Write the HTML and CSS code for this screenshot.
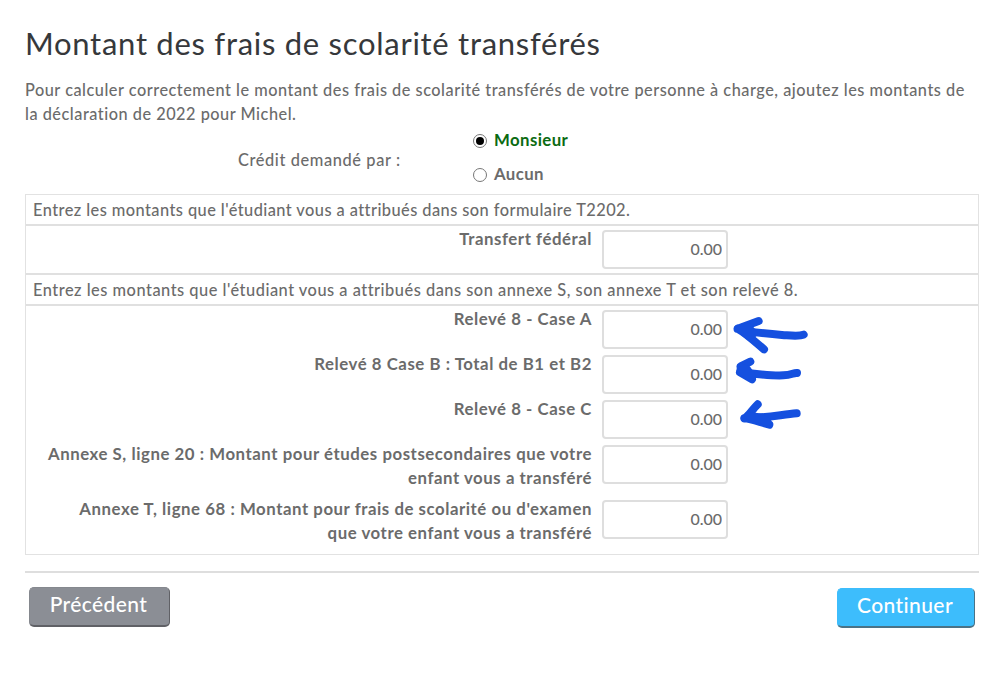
FILE: index.html
```html
<!DOCTYPE html>
<html lang="fr">
<head>
    <meta charset="utf-8">
    <title>Montant des frais de scolarité transférés</title>
    <link rel="stylesheet" href="styles.css">
</head>
<body>
    <h1>Montant des frais de scolarité transférés</h1>
    <p class="intro">Pour calculer correctement le montant des frais de scolarité transférés de votre personne à charge, ajoutez les montants de<br>la déclaration de 2022 pour Michel.</p>

    <div class="credit">
        <div class="credit-label">Crédit demandé par :</div>
        <div class="credit-options">
            <label class="option selected"><input type="radio" name="credit" checked>Monsieur</label>
            <label class="option"><input type="radio" name="credit">Aucun</label>
        </div>
    </div>

    <div class="amounts">
        <div class="section-title t2202">Entrez les montants que l'étudiant vous a attribués dans son formulaire T2202.</div>
        <div class="section federal">
            <div class="row">
                <label for="federal">Transfert fédéral</label>
                <input type="text" id="federal" value="0.00">
            </div>
        </div>
        <div class="section-title">Entrez les montants que l'étudiant vous a attribués dans son annexe S, son annexe T et son relevé 8.</div>
        <div class="section quebec">
            <div class="row">
                <label for="case-a">Relevé 8 - Case A</label>
                <input type="text" id="case-a" value="0.00">
            </div>
            <div class="row">
                <label for="case-b">Relevé 8 Case B : Total de B1 et B2</label>
                <input type="text" id="case-b" value="0.00">
            </div>
            <div class="row">
                <label for="case-c">Relevé 8 - Case C</label>
                <input type="text" id="case-c" value="0.00">
            </div>
            <div class="row tall">
                <label for="annexe-s">Annexe S, ligne 20 : Montant pour études postsecondaires que votre<br>enfant vous a transféré</label>
                <input type="text" id="annexe-s" value="0.00">
            </div>
            <div class="row tall">
                <label for="annexe-t">Annexe T, ligne 68 : Montant pour frais de scolarité ou d'examen<br>que votre enfant vous a transféré</label>
                <input type="text" id="annexe-t" value="0.00">
            </div>
            <svg class="arrows" width="100" height="140" viewBox="0 0 300 420">
                <path d="M53 83L116 60M53 83C80 98 108 125 132 145M53 84C95 95 150 99 200 103C225 105 240 106 251 101" />
                <path d="M60 84L85 78L100 98L85 104Z" />
                <path d="M62 196L91 182M60 214L96 235M60 213C100 218 150 225 190 223C215 222 220 215 231 216" />
                <path d="M62 200L82 206L96 227L62 213Z" />
                <path d="M73 352C88 344 97 325 113 310M73 352C95 354 120 364 148 371M73 352C120 352 180 342 230 337" />
                <path d="M85 344L125 350L142 362Z" />
            </svg>
        </div>
    </div>

    <div class="buttons">
        <button type="button" class="previous">Précédent</button>
        <button type="button" class="next">Continuer</button>
    </div>
</body>
</html>
```
FILE: styles.css
```css
body {
    margin: 0;
    padding: 23px 20px 0 25px;
    font-family: Lato, sans-serif;
    font-size: 16.4px;
    line-height: 24px;
    font-weight: 500;
    color: #6b6b6b;
    background-color: #fff;
}
h1 {
    margin: 0 0 15px;
    font-size: 31px;
    line-height: 40px;
    font-weight: 400;
    letter-spacing: 0.72px;
    color: #36383b;
    white-space: nowrap;
}
.intro {
    margin: 0;
    font-size: 16.3px;
    letter-spacing: 0.52px;
    white-space: nowrap;
}
.credit {
    display: grid;
    grid-template-columns: 448px 1fr;
    height: 68px;
}
.credit-label {
    padding: 22px 0 0 213px;
    letter-spacing: 0.6px;
}
.credit-options {
    padding-top: 2px;
}
.option {
    display: flex;
    align-items: center;
    height: 24px;
    margin-bottom: 10px;
    font-size: 16.8px;
    font-weight: 700;
    letter-spacing: 0.4px;
}
.option input {
    appearance: none;
    display: grid;
    place-items: center;
    width: 14px;
    height: 14px;
    margin: 2px 7px 0 0;
    border: 1px solid #777;
    border-radius: 50%;
    background-color: #fff;
}
.option input:checked::before {
    content: "";
    width: 8px;
    height: 8px;
    border-radius: 50%;
    background-color: #000;
}
.selected {
    color: #0b6b12;
}
.amounts {
    width: 952px;
    border: 1px solid #e2e2e2;
}
.section-title {
    height: 29px;
    padding-left: 7px;
    border-bottom: 2px solid #e0e0e0;
    line-height: 29px;
    letter-spacing: 0.5px;
    white-space: nowrap;
}
.t2202 {
    letter-spacing: 0.43px;
}
.section {
    padding-top: 4px;
}
.federal {
    height: 43px;
    border-bottom: 2px solid #e0e0e0;
}
.quebec {
    position: relative;
    height: 244px;
}
.row {
    display: grid;
    grid-template-columns: 566px 126px;
    column-gap: 10px;
    height: 45px;
}
.tall {
    height: 55px;
}
.row label {
    margin-top: -3px;
    font-size: 16.8px;
    font-weight: 700;
    text-align: right;
    letter-spacing: 0.55px;
    white-space: nowrap;
}
.row input {
    box-sizing: border-box;
    width: 126px;
    height: 39px;
    padding: 0 4px 2px;
    border: 2px solid #dedede;
    border-radius: 4px;
    font: inherit;
    font-size: 16px;
    color: #6b6b6b;
    text-align: right;
}
/* hand-drawn arrows over the three case fields */
.arrows {
    position: absolute;
    left: 694px;
    top: -5px;
    fill: none;
    stroke: #1550df;
    stroke-width: 24;
    stroke-linecap: round;
    stroke-linejoin: round;
}
.buttons {
    display: flex;
    justify-content: space-between;
    width: 946px;
    margin-top: 16px;
    padding: 14px 4px 0;
    border-top: 2px solid #dedede;
}
.buttons button {
    box-sizing: border-box;
    height: 40px;
    padding: 0 2px 6px 0;
    border: 1px solid #85888e;
    border-bottom: 2px solid #606166;
    border-right-color: #606166;
    border-radius: 5px;
    font-family: inherit;
    font-size: 21px;
    font-weight: 500;
    letter-spacing: 0.4px;
    color: #fff;
}
.buttons .previous {
    width: 141px;
    background-color: #8b8e95;
}
.buttons .next {
    width: 138px;
    margin-top: 1px;
    border-color: #3dbdfc #4a7286 #4a7286 #3dbdfc;
    background-color: #3dbdfc;
}
```
